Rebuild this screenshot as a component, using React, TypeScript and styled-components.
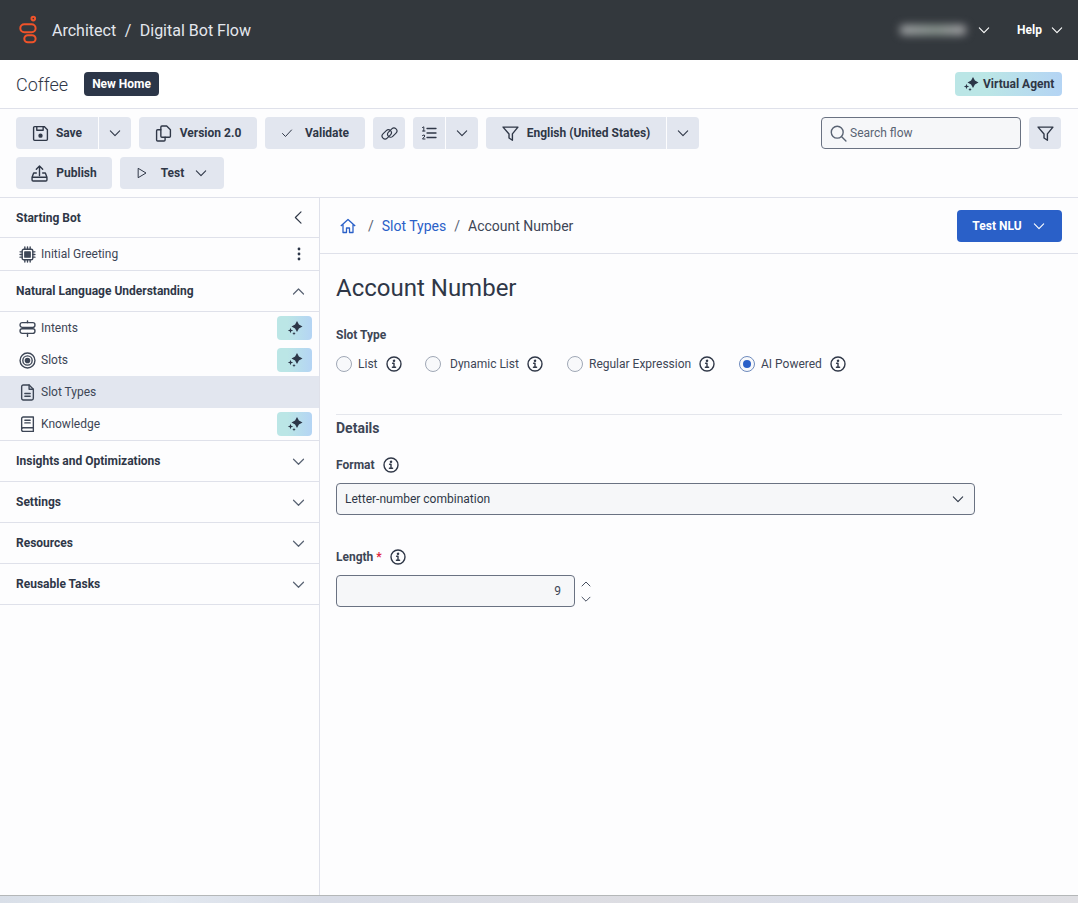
import styled, { createGlobalStyle } from "styled-components";

const GlobalStyle = createGlobalStyle`
    html, body {
        margin: 0;
        padding: 0;
        background: #fdfdfe;
    }

    body {
        font-family: Roboto, "Liberation Sans", sans-serif;
        color: #2f3747;
    }
`;

const Page = styled.div`
    width: 1078px;
    height: 903px;
    display: flex;
    flex-direction: column;
    overflow: hidden;
`;

const TopBar = styled.header`
    height: 60px;
    flex: none;
    background: #33383d;
    display: flex;
    align-items: center;
    padding: 0 14px 0 19px;
    color: #e4e7ee;
`;

const Crumbs = styled.div`
    display: flex;
    align-items: center;
    gap: 8.5px;
    margin-left: 14px;
    font-size: 16px;
`;

const TopRight = styled.div`
    margin-left: auto;
    display: flex;
    align-items: center;
    color: #fff;
`;

const BlurName = styled.span`
    width: 66px;
    height: 10px;
    background: linear-gradient(90deg, #a3a5a8, #8d9992 55%, #a9a7ab);
    border-radius: 4px;
    filter: blur(4px);
    margin-right: 11px;
`;

const HelpText = styled.span`
    font-size: 12px;
    font-weight: 700;
    margin-left: 26px;
    margin-right: 8px;
`;

const SubBar = styled.div`
    height: 48px;
    flex: none;
    box-sizing: content-box;
    border-bottom: 1px solid #dfe1ea;
    background: #fff;
    display: flex;
    align-items: center;
    padding: 0 16px;
`;

const FlowName = styled.span`
    font-size: 18px;
    font-weight: 300;
    color: #2f3747;
    margin-right: 16px;
`;

const HomeTag = styled.span`
    height: 24px;
    padding: 0 8px;
    background: #2c3648;
    color: #fff;
    border-radius: 4px;
    font-size: 12px;
    font-weight: 700;
    display: flex;
    align-items: center;
`;

const AgentTag = styled.span`
    margin-left: auto;
    height: 24px;
    width: 107px;
    box-sizing: border-box;
    padding-left: 8px;
    gap: 4px;
    background: linear-gradient(90deg, #bbe6e6 30%, #b4d4f4);
    border-radius: 4px;
    font-size: 12px;
    font-weight: 700;
    color: #2f3747;
    display: flex;
    align-items: center;
`;

const Toolbar = styled.div`
    height: 89px;
    flex: none;
    box-sizing: border-box;
    border-bottom: 1px solid #dfe1ea;
    padding: 8px 17px 0 16px;
    display: flex;
    justify-content: space-between;
    align-items: flex-start;
`;

const ToolRows = styled.div`
    display: flex;
    flex-direction: column;
    gap: 8px;
`;

const ToolRow = styled.div`
    display: flex;
    gap: 8px;
`;

const ToolGroup = styled.div`
    display: flex;
    gap: 1px;
`;

const ToolButton = styled.button<{ $w: number; $side?: "left" | "right"; $gap?: number }>`
    width: ${(p) => p.$w}px;
    height: 32px;
    padding: 0;
    border: 0;
    background: #e2e6ef;
    color: #2f3747;
    font-family: inherit;
    font-size: 12px;
    font-weight: 700;
    display: flex;
    align-items: center;
    justify-content: center;
    gap: ${(p) => p.$gap ?? 8}px;
    border-radius: ${(p) =>
        p.$side === "left" ? "4px 0 0 4px" : p.$side === "right" ? "0 4px 4px 0" : "4px"};
`;

const ValidateLabel = styled.span`
    margin-left: 4px;
`;

const TestLabel = styled.span`
    margin: 0 2px 0 5px;
`;

const SearchGroup = styled.div`
    display: flex;
    gap: 8px;
`;

const SearchBox = styled.div`
    width: 200px;
    height: 32px;
    box-sizing: border-box;
    background: #f6f7f9;
    border: 1px solid #6a7282;
    border-radius: 4px;
    display: flex;
    align-items: center;
    gap: 3px;
    padding-left: 8px;
    font-size: 12px;
    color: #596373;
`;

const Body = styled.div`
    flex: 1;
    display: flex;
    min-height: 0;
`;

const Sidebar = styled.aside`
    width: 320px;
    flex: none;
    box-sizing: border-box;
    border-right: 1px solid #dfe1ea;
`;

const SectionHead = styled.div<{ $h: number }>`
    height: ${(p) => p.$h}px;
    box-sizing: content-box;
    border-bottom: 1px solid #dfe1ea;
    padding: 0 13px 0 16px;
    display: flex;
    align-items: center;
    justify-content: space-between;
    font-size: 12px;
    font-weight: 700;
    color: #2f3747;
`;

const SectionArrow = styled.span`
    display: flex;
    color: #596373;
`;

const NavList = styled.div`
    border-bottom: 1px solid #dfe1ea;
`;

const NavRow = styled.div<{ $active?: boolean }>`
    height: 32px;
    display: flex;
    align-items: center;
    padding: 0 7px 0 19px;
    gap: 5px;
    font-size: 12px;
    color: #3d4656;
    background: ${(p) => (p.$active ? "#e2e6ef" : "transparent")};
`;

const NavEnd = styled.span`
    margin-left: auto;
    display: flex;
`;

const KebabWrap = styled(NavEnd)`
    margin-right: 5px;
`;

const AiChip = styled.span`
    width: 35px;
    height: 24px;
    border-radius: 4px;
    background: linear-gradient(90deg, #bbe6e6 30%, #b4d4f4);
    display: flex;
    align-items: center;
    justify-content: center;
`;

const Content = styled.main`
    flex: 1;
    min-width: 0;
`;

const CrumbBar = styled.div`
    height: 55px;
    box-sizing: content-box;
    border-bottom: 1px solid #dfe1ea;
    display: flex;
    align-items: center;
    padding: 0 16px 0 20px;
    font-size: 14px;
    color: #3d4656;
`;

const CrumbLink = styled.span`
    color: #2a60c8;
`;

const CrumbSep = styled.span<{ $left: number }>`
    margin: 0 8px 0 ${(p) => p.$left}px;
    color: #596373;
`;

const PrimaryButton = styled.button`
    margin-left: auto;
    width: 105px;
    height: 32px;
    border: 0;
    padding: 0 1px 0 0;
    border-radius: 4px;
    background: #2a60c8;
    color: #fff;
    font-family: inherit;
    font-size: 12px;
    font-weight: 700;
    display: flex;
    align-items: center;
    justify-content: center;
    gap: 10px;
`;

const Form = styled.div`
    padding: 0 16px;
    display: flex;
    flex-direction: column;
`;

const Title = styled.h1`
    margin: 19px 0 0;
    height: 30px;
    line-height: 30px;
    font-size: 24px;
    font-weight: 400;
    color: #2f3747;
`;

const FieldLabel = styled.div<{ $top: number }>`
    margin-top: ${(p) => p.$top}px;
    height: 20px;
    display: flex;
    align-items: center;
    gap: 3px;
    font-size: 12px;
    font-weight: 700;
    color: #3d4656;
`;

const Required = styled.span`
    color: #e0243c;
    margin-right: 5px;
`;

const LabelInfo = styled.span`
    display: flex;
    margin-left: 5px;
`;

const RadioRow = styled.div`
    margin-top: 9px;
    height: 20px;
    display: flex;
    align-items: center;
`;

const RadioItem = styled.label<{ $w: number }>`
    width: ${(p) => p.$w}px;
    display: flex;
    align-items: center;
    font-size: 12px;
    color: #3d4656;
    gap: 6px;
`;

const RadioText = styled.span`
    margin-right: 2px;
`;

const RadioDot = styled.span<{ $on?: boolean; $gap: number }>`
    width: 16px;
    height: 16px;
    box-sizing: border-box;
    flex: none;
    border-radius: 50%;
    border: 1px solid ${(p) => (p.$on ? "#6f8bbd" : "#a0a8b6")};
    background: #f8f9fb;
    margin-right: ${(p) => p.$gap}px;
    display: flex;
    align-items: center;
    justify-content: center;

    &::after {
        content: "";
        display: ${(p) => (p.$on ? "block" : "none")};
        width: 8px;
        height: 8px;
        border-radius: 50%;
        background: #2a60c8;
    }
`;

const Divider = styled.div`
    margin-top: 40px;
    border-top: 1px solid #e4e6ec;
`;

const DetailsHead = styled.div`
    height: 26px;
    line-height: 26px;
    font-size: 14px;
    font-weight: 700;
    color: #3d4656;
`;

const SelectBox = styled.div`
    margin-top: 8px;
    width: 639px;
    height: 32px;
    box-sizing: border-box;
    border: 1px solid #6a7282;
    border-radius: 4px;
    background: #f6f7f9;
    display: flex;
    align-items: center;
    justify-content: space-between;
    padding: 0 9px 0 8px;
    font-size: 12px;
    color: #2f3747;
`;

const StepperRow = styled.div`
    margin-top: 8px;
    display: flex;
    align-items: center;
    gap: 5px;
`;

const NumberBox = styled.div`
    width: 239px;
    height: 32px;
    box-sizing: border-box;
    border: 1px solid #6a7282;
    border-radius: 4px;
    background: #f6f7f9;
    display: flex;
    align-items: center;
    justify-content: flex-end;
    padding-right: 13px;
    font-size: 12px;
    color: #3d4656;
`;

const Stepper = styled.div`
    display: flex;
    flex-direction: column;
    gap: 3px;
    color: #3d4656;
`;

const BottomStrip = styled.div`
    height: 7px;
    flex: none;
    border-top: 1px solid #b4b7b8;
    background: linear-gradient(90deg, #d9dfe8, #e2e8f0 15%, #d8dce6 30%, #dddde2 60%, #d9deea 80%, #dfdfe3);
`;

const Icon = styled.svg.attrs({ fill: "none", stroke: "currentColor" })<{ $size?: number }>`
    width: ${(p) => p.$size ?? 16}px;
    height: ${(p) => p.$size ?? 16}px;
    flex: none;
    display: block;
    stroke-width: 1.3;
    stroke-linecap: round;
    stroke-linejoin: round;
`;

function Chevron({ dir = "down", size = 14 }: { dir?: "down" | "up" | "left"; size?: number }) {
    const d = dir === "down" ? "M2 4.2 L6 8.2 L10 4.2" : dir === "up" ? "M2 8 L6 4 L10 8" : "M8 1.5 L3.5 6 L8 10.5";
    return (
        <Icon viewBox="0 0 12 12" $size={size} style={{ strokeWidth: 0.95 }}>
            <path d={d} />
        </Icon>
    );
}

function InfoIcon() {
    return (
        <Icon viewBox="0 0 16 16" $size={16} style={{ strokeWidth: 1.4, color: "#2f3747" }}>
            <circle cx="8" cy="8" r="7" />
            <path d="M6.6 7.2 H8 V11.2 M6.4 11.3 H9.6" />
            <circle cx="8" cy="4.8" r="0.6" fill="currentColor" />
        </Icon>
    );
}

function Sparkles() {
    return (
        <svg width="16" height="16" viewBox="0 0 16 16" fill="#2c3648" style={{ display: "block" }}>
            <path d="M10 1 L11.9 4.6 L15.5 6.5 L11.9 8.4 L10 12 L8.1 8.4 L4.5 6.5 L8.1 4.6 Z" />
            <path d="M3.5 7.8 L4.2 9.8 L6.2 10.5 L4.2 11.2 L3.5 13.2 L2.8 11.2 L0.8 10.5 L2.8 9.8 Z" />
            <path d="M7 11.8 L7.5 13 L8.7 13.5 L7.5 14 L7 15.2 L6.5 14 L5.3 13.5 L6.5 13 Z" />
        </svg>
    );
}

function FilterIcon() {
    return (
        <Icon viewBox="0 0 16 16" $size={17}>
            <path d="M1 2 H15 L9.8 8.4 V14.4 L6.6 12.2 V8.4 Z" />
        </Icon>
    );
}

function App() {
    return (
        <Page>
            <GlobalStyle />
            <TopBar>
                <svg width="19" height="30" viewBox="0 0 19 30" fill="none" stroke="#f0532a" strokeWidth="2">
                    <circle cx="14.3" cy="3.6" r="1.8" />
                    <rect x="1.3" y="9.3" width="15.3" height="8" rx="4" />
                    <rect x="5.3" y="20.3" width="11.3" height="7" rx="3.5" />
                </svg>
                <Crumbs>
                    <span>Architect</span>
                    <span>/</span>
                    <span>Digital Bot Flow</span>
                </Crumbs>
                <TopRight>
                    <BlurName />
                    <Chevron />
                    <HelpText>Help</HelpText>
                    <Chevron />
                </TopRight>
            </TopBar>

            <SubBar>
                <FlowName>Coffee</FlowName>
                <HomeTag>New Home</HomeTag>
                <AgentTag>
                    <Sparkles />
                    Virtual Agent
                </AgentTag>
            </SubBar>

            <Toolbar>
                <ToolRows>
                    <ToolRow>
                        <ToolGroup>
                            <ToolButton $w={82} $side="left" $gap={7}>
                                <Icon viewBox="0 0 16 16" $size={17}>
                                    <path d="M1.5 2.5 a1 1 0 0 1 1-1 H11.5 L14.5 4.5 V13.5 a1 1 0 0 1-1 1 H2.5 a1 1 0 0 1-1-1 Z" />
                                    <path d="M4.5 1.5 V5 H10.5 V1.5" />
                                    <circle cx="8" cy="10" r="1.4" fill="currentColor" />
                                </Icon>
                                Save
                            </ToolButton>
                            <ToolButton $w={32} $side="right">
                                <Chevron />
                            </ToolButton>
                        </ToolGroup>
                        <ToolButton $w={118}>
                            <Icon viewBox="0 0 16 16" $size={17}>
                                <path d="M5.5 2 a1 1 0 0 1 1-1 H11 L14.5 4.5 V10.5 a1 1 0 0 1-1 1 H6.5 a1 1 0 0 1-1-1 Z" />
                                <path d="M5.5 4.5 H2.5 a1 1 0 0 0-1 1 V14 a1 1 0 0 0 1 1 H8.5 a1 1 0 0 0 1-1 V11.5" />
                            </Icon>
                            Version 2.0
                        </ToolButton>
                        <ToolButton $w={100}>
                            <Icon viewBox="0 0 12 12" $size={12} style={{ strokeWidth: 1 }}>
                                <path d="M1.5 6.5 L4.5 9.5 L10.5 3" />
                            </Icon>
                            <ValidateLabel>Validate</ValidateLabel>
                        </ToolButton>
                        <ToolButton $w={32}>
                            <Icon viewBox="0 0 16 16" $size={17} style={{ strokeWidth: 1.1 }}>
                                <rect x="0.4" y="6" width="10" height="5.6" rx="2.8" transform="rotate(-45 5.4 8.8)" />
                                <rect x="5.6" y="4.4" width="10" height="5.6" rx="2.8" transform="rotate(-45 10.6 7.2)" />
                            </Icon>
                        </ToolButton>
                        <ToolGroup>
                            <ToolButton $w={32} $side="left">
                                <Icon viewBox="0 0 16 16" $size={16}>
                                    <path d="M6 3.5 H15 M6 8 H15 M6 12.5 H15" />
                                    <path d="M1.5 2.5 L2.8 1.8 V6 M1.5 6 H4 M1.5 10.5 Q3.8 9 3.9 11 L1.5 14 H4" strokeWidth="1" />
                                </Icon>
                            </ToolButton>
                            <ToolButton $w={32} $side="right">
                                <Chevron />
                            </ToolButton>
                        </ToolGroup>
                        <ToolGroup>
                            <ToolButton $w={180} $side="left">
                                <FilterIcon />
                                English (United States)
                            </ToolButton>
                            <ToolButton $w={32} $side="right">
                                <Chevron />
                            </ToolButton>
                        </ToolGroup>
                    </ToolRow>
                    <ToolRow>
                        <ToolButton $w={96}>
                            <Icon viewBox="0 0 16 16" $size={17}>
                                <path d="M8 10 V1 M5 4 L8 1 L11 4" />
                                <path d="M5 7.5 H2.5 L1 11.5 V14 a1 1 0 0 0 1 1 H14 a1 1 0 0 0 1-1 V11.5 L13.5 7.5 H11 M1 11.5 H15" />
                            </Icon>
                            Publish
                        </ToolButton>
                        <ToolButton $w={104}>
                            <Icon viewBox="0 0 12 12" $size={12} style={{ strokeWidth: 1 }}>
                                <path d="M2.5 1.5 L10 6 L2.5 10.5 Z" />
                            </Icon>
                            <TestLabel>Test</TestLabel>
                            <Chevron />
                        </ToolButton>
                    </ToolRow>
                </ToolRows>
                <SearchGroup>
                    <SearchBox>
                        <Icon viewBox="0 0 16 16" $size={17}>
                            <circle cx="6.8" cy="6.8" r="5.6" />
                            <path d="M11 11 L15 15" />
                        </Icon>
                        Search flow
                    </SearchBox>
                    <ToolButton $w={32}>
                        <FilterIcon />
                    </ToolButton>
                </SearchGroup>
            </Toolbar>

            <Body>
                <Sidebar>
                    <SectionHead $h={39}>
                        Starting Bot
                        <Chevron dir="left" size={15} />
                    </SectionHead>
                    <NavList>
                        <NavRow>
                            <Icon viewBox="0 0 16 16" $size={17}>
                                <rect x="3" y="3" width="10" height="10" rx="1.5" />
                                <rect x="5.5" y="5.5" width="5" height="5" fill="currentColor" />
                                <path d="M5.5 1 V3 M8 1 V3 M10.5 1 V3 M5.5 13 V15 M8 13 V15 M10.5 13 V15 M1 5.5 H3 M1 8 H3 M1 10.5 H3 M13 5.5 H15 M13 8 H15 M13 10.5 H15" />
                            </Icon>
                            Initial Greeting
                            <KebabWrap>
                                <svg width="16" height="16" viewBox="0 0 16 16" fill="#2c3648">
                                    <circle cx="8" cy="3" r="1.4" />
                                    <circle cx="8" cy="8" r="1.4" />
                                    <circle cx="8" cy="13" r="1.4" />
                                </svg>
                            </KebabWrap>
                        </NavRow>
                    </NavList>
                    <SectionHead $h={40}>
                        Natural Language Understanding
                        <SectionArrow>
                            <Chevron dir="up" size={15} />
                        </SectionArrow>
                    </SectionHead>
                    <NavList>
                        <NavRow>
                            <Icon viewBox="0 0 16 16" $size={17}>
                                <rect x="1" y="2.5" width="14" height="4.4" rx="2" />
                                <rect x="1" y="8.2" width="14" height="4.4" rx="2" />
                                <path d="M8 0.8 V2.5 M8 12.6 V15.4" />
                            </Icon>
                            Intents
                            <NavEnd>
                                <AiChip>
                                    <Sparkles />
                                </AiChip>
                            </NavEnd>
                        </NavRow>
                        <NavRow>
                            <Icon viewBox="0 0 16 16" $size={17}>
                                <circle cx="8" cy="8" r="7" />
                                <circle cx="8" cy="8" r="4.4" />
                                <circle cx="8" cy="8" r="2" fill="currentColor" />
                            </Icon>
                            Slots
                            <NavEnd>
                                <AiChip>
                                    <Sparkles />
                                </AiChip>
                            </NavEnd>
                        </NavRow>
                        <NavRow $active>
                            <Icon viewBox="0 0 16 16" $size={17}>
                                <path d="M2.5 2.5 a1.5 1.5 0 0 1 1.5-1.5 H9.5 L13.5 5 V13.5 a1.5 1.5 0 0 1-1.5 1.5 H4 a1.5 1.5 0 0 1-1.5-1.5 Z" />
                                <path d="M9.5 1 V5 H13.5 M5.5 9 H10.5 M5.5 11.5 H10.5" />
                            </Icon>
                            Slot Types
                        </NavRow>
                        <NavRow>
                            <Icon viewBox="0 0 16 16" $size={17}>
                                <path d="M2.5 12.5 V2.5 a1.5 1.5 0 0 1 1.5-1.5 H13.5 V11 H4 a1.5 1.5 0 0 0-1.5 1.5 a1.5 1.5 0 0 0 1.5 2 H13.5 V11" />
                                <path d="M5.5 4 H10.5 M5.5 6.5 H10.5" />
                            </Icon>
                            Knowledge
                            <NavEnd>
                                <AiChip>
                                    <Sparkles />
                                </AiChip>
                            </NavEnd>
                        </NavRow>
                    </NavList>
                    {["Insights and Optimizations", "Settings", "Resources", "Reusable Tasks"].map((name) => (
                        <SectionHead $h={40} key={name}>
                            {name}
                            <SectionArrow>
                                <Chevron size={15} />
                            </SectionArrow>
                        </SectionHead>
                    ))}
                </Sidebar>

                <Content>
                    <CrumbBar>
                        <svg width="16" height="16" viewBox="0 0 16 16" fill="none" stroke="#2a60c8" strokeWidth="1.3" strokeLinejoin="round">
                            <path d="M0.8 8 L8 1.5 L15.2 8 M3 6.5 V14.5 H6.5 V10 H9.5 V14.5 H13 V6.5" />
                        </svg>
                        <CrumbSep $left={12}>/</CrumbSep>
                        <CrumbLink>Slot Types</CrumbLink>
                        <CrumbSep $left={8}>/</CrumbSep>
                        <span>Account Number</span>
                        <PrimaryButton>
                            Test NLU
                            <Chevron />
                        </PrimaryButton>
                    </CrumbBar>
                    <Form>
                        <Title>Account Number</Title>
                        <FieldLabel $top={22}>Slot Type</FieldLabel>
                        <RadioRow>
                            <RadioItem $w={89}>
                                <RadioDot $gap={0} />
                                <RadioText>List</RadioText>
                                <InfoIcon />
                            </RadioItem>
                            <RadioItem $w={142}>
                                <RadioDot $gap={3} />
                                <RadioText>Dynamic List</RadioText>
                                <InfoIcon />
                            </RadioItem>
                            <RadioItem $w={172}>
                                <RadioDot $gap={0} />
                                <RadioText>Regular Expression</RadioText>
                                <InfoIcon />
                            </RadioItem>
                            <RadioItem $w={120}>
                                <RadioDot $on $gap={0} />
                                <RadioText>AI Powered</RadioText>
                                <InfoIcon />
                            </RadioItem>
                        </RadioRow>
                        <Divider />
                        <DetailsHead>Details</DetailsHead>
                        <FieldLabel $top={14}>
                            Format
                            <LabelInfo>
                                <InfoIcon />
                            </LabelInfo>
                        </FieldLabel>
                        <SelectBox>
                            Letter-number combination
                            <Chevron />
                        </SelectBox>
                        <FieldLabel $top={32}>
                            <span>
                                Length <Required>*</Required>
                            </span>
                            <InfoIcon />
                        </FieldLabel>
                        <StepperRow>
                            <NumberBox>9</NumberBox>
                            <Stepper>
                                <Chevron dir="up" size={12} />
                                <Chevron size={12} />
                            </Stepper>
                        </StepperRow>
                    </Form>
                </Content>
            </Body>
            <BottomStrip />
        </Page>
    );
}

export default App;
